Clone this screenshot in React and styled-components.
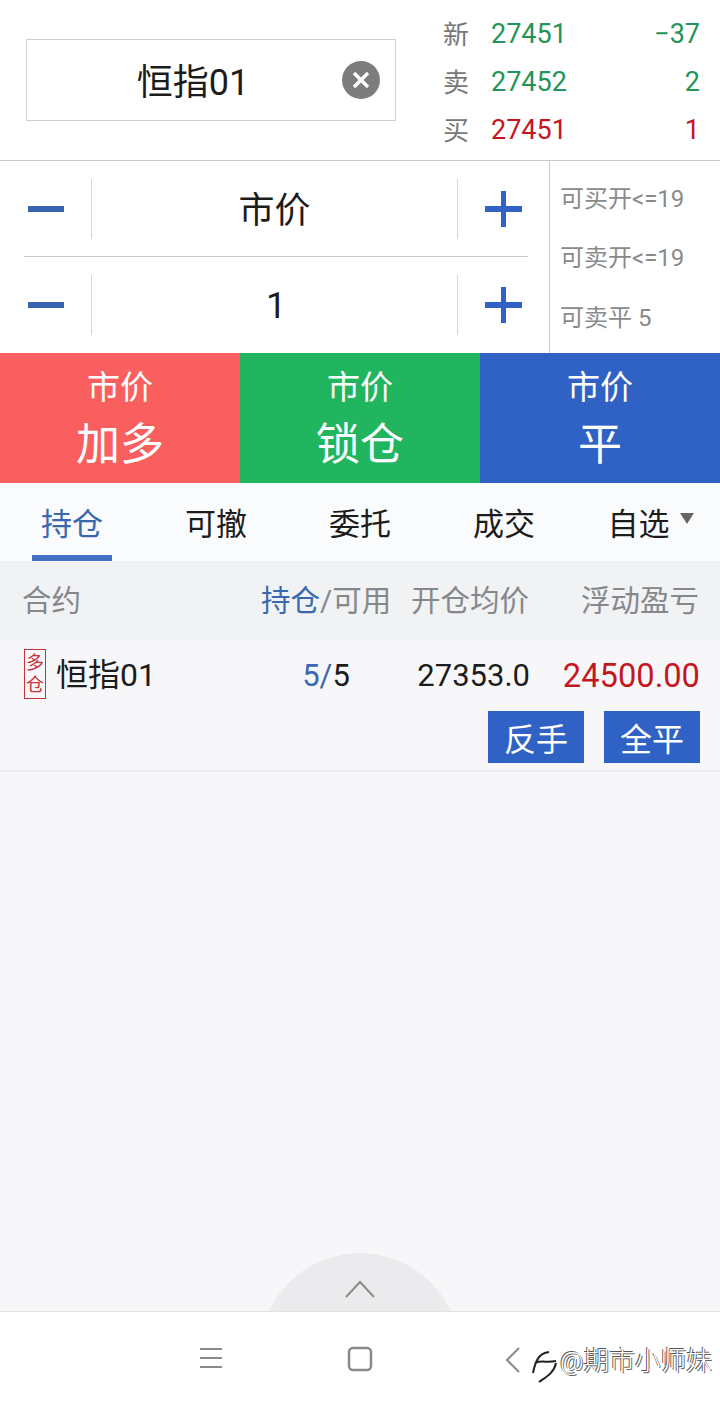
import React from 'react'
import styled, { createGlobalStyle } from 'styled-components'

const GlobalStyle = createGlobalStyle`
  html, body {
    margin: 0;
    padding: 0;
    background: #f7f7f9;
    font-family: Roboto, "Noto Sans CJK SC", sans-serif;
  }
  * { box-sizing: border-box; }
`

const BLUE = '#2f62c4'
const TEXT_BLUE = '#3a68b0'
const GREEN = '#23945a'
const RED = '#c4161f'

const Page = styled.div`
  position: relative;
  width: 720px;
  height: 1407px;
  overflow: hidden;
  display: flex;
  flex-direction: column;
  background: #f7f7f9;
`

const Header = styled.div`
  height: 161px;
  background: #fff;
  border-bottom: 1px solid #c9c9c9;
  display: flex;
  padding: 10px 20px 0 26px;
`

const SearchBox = styled.div`
  position: relative;
  width: 370px;
  height: 82px;
  margin-top: 29px;
  border: 1px solid #cfcfcf;
  display: flex;
  align-items: center;
  justify-content: center;
  padding: 0 36px 2px 0;
  font-size: 36px;
  color: #1c1c1c;
`

const ClearButton = styled.div`
  position: absolute;
  right: 15px;
  top: 21px;
  width: 38px;
  height: 38px;
  border-radius: 50%;
  background: #7d7d7d;
  display: flex;
  align-items: center;
  justify-content: center;
`

const QuoteList = styled.div`
  margin-left: 47px;
  flex: 1;
  display: flex;
  flex-direction: column;
`

const QuoteRow = styled.div`
  height: 48px;
  display: flex;
  align-items: center;
  font-size: 27px;
`

const QuoteLabel = styled.span`
  width: 48px;
  margin-bottom: 4px;
  font-size: 26px;
  color: #777;
`

const QuoteValue = styled.span`
  flex: 1;
  color: ${p => p.$color};
`

const QuoteChange = styled.span`
  color: ${p => p.$color};
`

const OrderPanel = styled.div`
  height: 192px;
  background: #fff;
  display: flex;
`

const Steppers = styled.div`
  width: 549px;
  padding: 0 21px 0 24px;
  display: flex;
  flex-direction: column;
`

const StepperRow = styled.div`
  height: 96px;
  display: flex;
  align-items: center;
  border-bottom: ${p => (p.$first ? '1px solid #cbcbcb' : 'none')};
`

const StepButton = styled.div`
  width: 67px;
  height: 60px;
  display: flex;
  align-items: center;
  padding-left: 4px;
`

const AddButton = styled(StepButton)`
  width: 70px;
  padding-left: 27px;
`

const StepValue = styled.div`
  flex: 1;
  height: 60px;
  border-left: 1px solid #d6d6d6;
  border-right: 1px solid #d6d6d6;
  display: flex;
  align-items: center;
  justify-content: center;
  padding: ${p => (p.$first ? '0 0 3px 0' : '2px 0 0 3px')};
  font-size: 36px;
  color: #1c1c1c;
`

const Limits = styled.div`
  flex: 1;
  border-left: 1px solid #c9c9c9;
  padding: 6px 0 8px 10px;
  display: flex;
  flex-direction: column;
  justify-content: space-between;
  font-size: 24px;
  color: #8a8a8a;
`

const LimitRow = styled.div`
  height: 60px;
  display: flex;
  align-items: center;
`

const ActionBar = styled.div`
  height: 130px;
  display: flex;
`

const ActionButton = styled.div`
  flex: 1;
  background: ${p => p.$bg};
  color: #fff;
  display: flex;
  flex-direction: column;
  align-items: center;
  padding-top: 12px;
`

const ActionSmall = styled.div`
  font-size: 33px;
  line-height: 46px;
`

const ActionBig = styled.div`
  font-size: 44px;
  line-height: 68px;
`

const Tabs = styled.div`
  height: 78px;
  display: flex;
  background: #fafbfc;
`

const Tab = styled.div`
  position: relative;
  width: 144px;
  display: flex;
  align-items: center;
  justify-content: center;
  padding: 0 0 2px ${p => (p.$menu ? '5px' : '0')};
  font-size: 31px;
  color: ${p => (p.$active ? TEXT_BLUE : '#1c1c1c')};
`

const TabMark = styled.div`
  position: absolute;
  left: 32px;
  bottom: 0;
  width: 80px;
  height: 6px;
  background: #4470c4;
`

const Caret = styled.span`
  width: 0;
  height: 0;
  margin-left: 10px;
  margin-bottom: 6px;
  border-left: 7px solid transparent;
  border-right: 7px solid transparent;
  border-top: 11px solid #666;
`

const TableHead = styled.div`
  height: 79px;
  background: #f0f2f4;
  padding: 0 21px 5px 22px;
  display: flex;
  align-items: center;
  font-size: 29.5px;
  color: #85878b;
`

const ColName = styled.div`
  width: 239px;
`

const ColHold = styled.div`
  width: ${p => p.$w}px;
  text-align: ${p => (p.$center ? 'center' : 'left')};
  white-space: nowrap;
`

const ColPrice = styled.div`
  width: ${p => p.$w}px;
  text-align: right;
  white-space: nowrap;
`

const ColProfit = styled.div`
  flex: 1;
  text-align: right;
  white-space: nowrap;
`

const RowProfit = styled(ColProfit)`
  font-size: 32.7px;
  color: ${RED};
`

const Blue = styled.span`
  color: ${TEXT_BLUE};
`

const Position = styled.div`
  height: 132px;
  border-bottom: 2px solid #ebedef;
  padding: 0 20px 0 24px;
  display: flex;
  flex-direction: column;
`

const PositionRow = styled.div`
  height: 71px;
  display: flex;
  align-items: center;
  font-size: 31px;
  color: #1c1c1c;
`

const NameCell = styled.div`
  width: 237px;
  display: flex;
  align-items: center;
  font-size: 32px;
`

const NameText = styled.span`
  margin-bottom: 8px;
`

const Tag = styled.div`
  width: 22px;
  height: 50px;
  margin: 0 10px 3px 0;
  border: 1px solid #c8323c;
  color: #c8323c;
  font-size: 18px;
  line-height: 22px;
  text-align: center;
  padding-top: 2px;
  overflow: hidden;
  word-break: break-all;
`

const PositionActions = styled.div`
  display: flex;
  justify-content: flex-end;
  gap: 20px;
`

const SmallButton = styled.div`
  width: 96px;
  height: 52px;
  background: ${BLUE};
  color: #fff;
  font-size: 32px;
  display: flex;
  align-items: center;
  justify-content: center;
`

const Spacer = styled.div`
  flex: 1;
`

const NavBar = styled.div`
  height: 96px;
  background: #fff;
  border-top: 1px solid #e2e2e2;
  display: flex;
  align-items: flex-start;
  padding: 34px 0 0 198px;
`

const PullUp = styled.div`
  position: absolute;
  left: 260px;
  top: 1253px;
  width: 200px;
  height: 58px;
  overflow: hidden;
`

const PullCircle = styled.div`
  width: 200px;
  height: 200px;
  border-radius: 50%;
  background: #ebebed;
  display: flex;
  justify-content: center;
  padding-top: 27px;
`

const NavIcon = styled.svg`
  display: block;
  margin-right: ${p => p.$gap}px;
  flex-shrink: 0;
`

const Watermark = styled.div`
  position: absolute;
  left: 532px;
  top: 1346px;
  display: flex;
  align-items: flex-start;
`

const WatermarkText = styled.span`
  margin-top: -2px;
  font-size: 25.7px;
  font-weight: 300;
  line-height: 34px;
  color: #fff;
  text-shadow: -1px -1px 0 #555, 1px 1px 0 #666;
`

function Minus() {
  return (
    <svg width="36" height="6" viewBox="0 0 36 6">
      <rect width="36" height="6" fill="#3a62ae" />
    </svg>
  )
}

function Plus() {
  return (
    <svg width="37" height="36" viewBox="0 0 37 36">
      <rect y="15" width="37" height="6" fill={BLUE} />
      <rect x="16" width="5" height="36" fill={BLUE} />
    </svg>
  )
}

export default function App() {
  return (
    <Page>
      <GlobalStyle />
      <Header>
        <SearchBox>
          恒指01
          <ClearButton>
            <svg width="20" height="20" viewBox="0 0 20 20">
              <path d="M3 3 L17 17 M17 3 L3 17" stroke="#fff" strokeWidth="3.5" />
            </svg>
          </ClearButton>
        </SearchBox>
        <QuoteList>
          <QuoteRow>
            <QuoteLabel>新</QuoteLabel>
            <QuoteValue $color={GREEN}>27451</QuoteValue>
            <QuoteChange $color={GREEN}>−37</QuoteChange>
          </QuoteRow>
          <QuoteRow>
            <QuoteLabel>卖</QuoteLabel>
            <QuoteValue $color={GREEN}>27452</QuoteValue>
            <QuoteChange $color={GREEN}>2</QuoteChange>
          </QuoteRow>
          <QuoteRow>
            <QuoteLabel>买</QuoteLabel>
            <QuoteValue $color={RED}>27451</QuoteValue>
            <QuoteChange $color={RED}>1</QuoteChange>
          </QuoteRow>
        </QuoteList>
      </Header>

      <OrderPanel>
        <Steppers>
          <StepperRow $first>
            <StepButton><Minus /></StepButton>
            <StepValue $first>市价</StepValue>
            <AddButton><Plus /></AddButton>
          </StepperRow>
          <StepperRow>
            <StepButton><Minus /></StepButton>
            <StepValue>1</StepValue>
            <AddButton><Plus /></AddButton>
          </StepperRow>
        </Steppers>
        <Limits>
          <LimitRow>可买开&lt;=19</LimitRow>
          <LimitRow>可卖开&lt;=19</LimitRow>
          <LimitRow>可卖平 5</LimitRow>
        </Limits>
      </OrderPanel>

      <ActionBar>
        <ActionButton $bg="#fa5f5f">
          <ActionSmall>市价</ActionSmall>
          <ActionBig>加多</ActionBig>
        </ActionButton>
        <ActionButton $bg="#22b560">
          <ActionSmall>市价</ActionSmall>
          <ActionBig>锁仓</ActionBig>
        </ActionButton>
        <ActionButton $bg="#2f62c4">
          <ActionSmall>市价</ActionSmall>
          <ActionBig>平</ActionBig>
        </ActionButton>
      </ActionBar>

      <Tabs>
        <Tab $active>持仓<TabMark /></Tab>
        <Tab>可撤</Tab>
        <Tab>委托</Tab>
        <Tab>成交</Tab>
        <Tab $menu>自选<Caret /></Tab>
      </Tabs>

      <TableHead>
        <ColName>合约</ColName>
        <ColHold $w={150}><Blue>持仓</Blue>/可用</ColHold>
        <ColPrice $w={117}>开仓均价</ColPrice>
        <ColProfit>浮动盈亏</ColProfit>
      </TableHead>

      <Position>
        <PositionRow>
          <NameCell>
            <Tag>多仓</Tag>
            <NameText>恒指01</NameText>
          </NameCell>
          <ColHold $w={130} $center><Blue>5/</Blue>5</ColHold>
          <ColPrice $w={139}>27353.0</ColPrice>
          <RowProfit>24500.00</RowProfit>
        </PositionRow>
        <PositionActions>
          <SmallButton>反手</SmallButton>
          <SmallButton>全平</SmallButton>
        </PositionActions>
      </Position>

      <Spacer />

      <PullUp>
        <PullCircle>
          <svg width="30" height="18" viewBox="0 0 30 18">
            <path d="M1 17 L15 2 L29 17" fill="none" stroke="#8b8b8b" strokeWidth="2" />
          </svg>
        </PullCircle>
      </PullUp>

      <NavBar>
        <NavIcon $gap={123} width="26" height="24" viewBox="0 0 26 24">
          <path d="M2 3 H24 M2 12 H24 M2 21 H24" stroke="#8a8a8a" strokeWidth="2" />
        </NavIcon>
        <NavIcon $gap={131} width="26" height="26" viewBox="0 0 26 26">
          <rect x="2" y="2" width="22" height="22" rx="4" fill="none" stroke="#8a8a8a" strokeWidth="2.5" />
        </NavIcon>
        <NavIcon $gap={0} width="18" height="28" viewBox="0 0 18 28">
          <path d="M15 2 L3 14 L15 26" fill="none" stroke="#8a8a8a" strokeWidth="2" />
        </NavIcon>
      </NavBar>

      <Watermark>
        <svg width="28" height="40" viewBox="0 3 28 40">
          <path d="M1 30 C3 20 6 10 17 9 M3 20 C10 17 14 20 24 18 M24 20 C22 30 14 34 7 39" fill="none" stroke="#222" strokeWidth="2" />
        </svg>
        <WatermarkText>@期市小师妹</WatermarkText>
      </Watermark>
    </Page>
  )
}
